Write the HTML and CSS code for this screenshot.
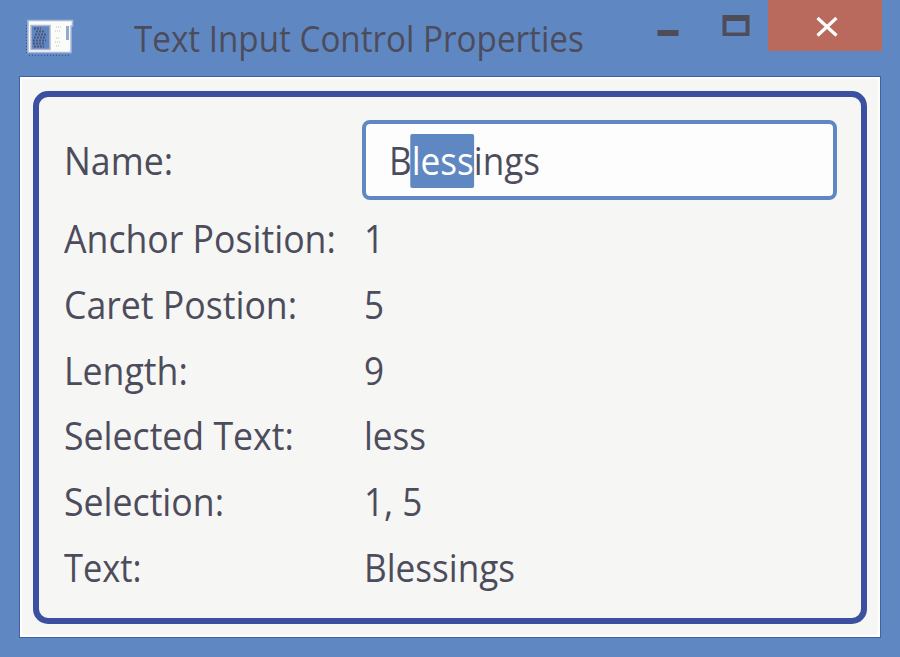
FILE: index.html
```html
<!DOCTYPE html>
<html lang="en">
<head>
<meta charset="utf-8">
<title>Text Input Control Properties</title>
<link rel="stylesheet" href="styles.css">
</head>
<body>
<header class="titlebar">
  <svg class="app-icon" width="48" height="42" viewBox="0 0 48 42">
    <path d="M2 3.500H46.500V9H45V35.500H2Z" fill="#fbfbf9" stroke="#aab9da" stroke-width="1.500"/>
    <rect x="5" y="8.500" width="19" height="24" fill="#5f88c2" stroke="#b0b9cf" stroke-width="1.500"/>
    <path d="M8 11.500h7M10 14.500h9M9 17.500h11M8 20.500h12M7 23.500h13M7 26.500h12M8 29.500h10" stroke="#4d5578" stroke-width="2" stroke-dasharray="2 1"/>
    <path d="M30 10h5M29 14h6M30 21h4M29 25h5M30 29h4" stroke="#dcdedb" stroke-width="2" stroke-dasharray="1 1"/>
    <path d="M41.500 9v14" stroke="#91a9d3" stroke-width="3"/>
    <path d="M3 38.500H45M0.500 8v28" stroke="#3b50a0" stroke-width="1" stroke-dasharray="1 2"/>
  </svg>
  <h1 class="title"><span class="fit">Text Input Control Properties</span></h1>
  <div class="controls">
    <svg class="glyphs" width="110" height="40" viewBox="0 0 110 40">
      <path d="M0.500 30h21v6h-21z" fill="#4d4c58"/>
      <path d="M65.500 15h27v21h-27zM69.500 21v11.500h19v-11.500z" fill="#4d4c58" fill-rule="evenodd"/>
    </svg>
    <div class="close">
      <svg width="24" height="22" viewBox="0 0 24 22"><path d="M2.500 2L21.500 19.500M21.500 2L2.500 19.500" stroke="#fff" stroke-width="3.200"/></svg>
    </div>
  </div>
</header>
<main class="client">
  <div class="frame">
    <div class="row name-row"><div class="label"><span class="fit">Name:</span></div><div class="field"><span class="fit">B<mark>less</mark>ings</span></div></div>
    <div class="row"><div class="label"><span class="fit">Anchor Position:</span></div><div><span class="fit">1</span></div></div>
    <div class="row"><div class="label"><span class="fit">Caret Postion:</span></div><div><span class="fit">5</span></div></div>
    <div class="row"><div class="label"><span class="fit">Length:</span></div><div><span class="fit">9</span></div></div>
    <div class="row"><div class="label"><span class="fit">Selected Text:</span></div><div><span class="fit">less</span></div></div>
    <div class="row"><div class="label"><span class="fit">Selection:</span></div><div><span class="fit">1, 5</span></div></div>
    <div class="row"><div class="label"><span class="fit short">Text:</span></div><div><span class="fit">Blessings</span></div></div>
  </div>
</main>
</body>
</html>
```
FILE: styles.css
```css
* { box-sizing: border-box; }
body {
  margin: 0;
  width: 900px;
  height: 657px;
  overflow: hidden;
  background: #5f88c2;
  color: #4d4c5c;
  font: 38px/54px "Open Sans", "Noto Sans", sans-serif;
}
.titlebar { display: flex; height: 76px; padding-left: 26px; }
.app-icon { margin-top: 17px; }
.title { margin: 12px 0 0 60px; width: 522px; font: 400 36px/54px "Open Sans", sans-serif; white-space: nowrap; }
.fit { display: inline-block; transform-origin: 0 50%; transform: scaleX(.925); white-space: nowrap; }
.title .fit { transform: scaleX(.922); }
.label .fit { transform: scaleX(.938); }
.label .short { transform: scaleX(.905); }
.controls { display: flex; }
.glyphs { width: 112px; flex: none; }
.close { width: 114px; height: 51px; background: #ba695d; display: flex; align-items: center; justify-content: center; padding: 2px 0 0 3px; }
.client { margin-left: 19px; width: 862px; height: 562px; padding: 14px 12px 12px 13px; background: #f6f6f4; border: 1px solid #4160aa; box-shadow: inset 0 0 0 2px #fff; }
.frame { height: 533px; width: 834px; border: 6px solid #3b50a0; border-radius: 15px; padding: 23px 24px 0 25px; }
.row { display: grid; grid-template-columns: 300px 1fr; height: 65.700px; align-items: center; }
.label { white-space: nowrap; }
.name-row { grid-template-columns: 298px 475px; height: 80px; margin-bottom: 5.500px; }
.field { height: 80px; border: 4px solid #5f88c2; border-radius: 8px; background: #fdfdfd; padding: 9px 0 0 23px; }
mark { background: #5f88c2; color: #fff; border-radius: 2px; padding: 0 0 2px 2px; margin-left: -2px; }
```
